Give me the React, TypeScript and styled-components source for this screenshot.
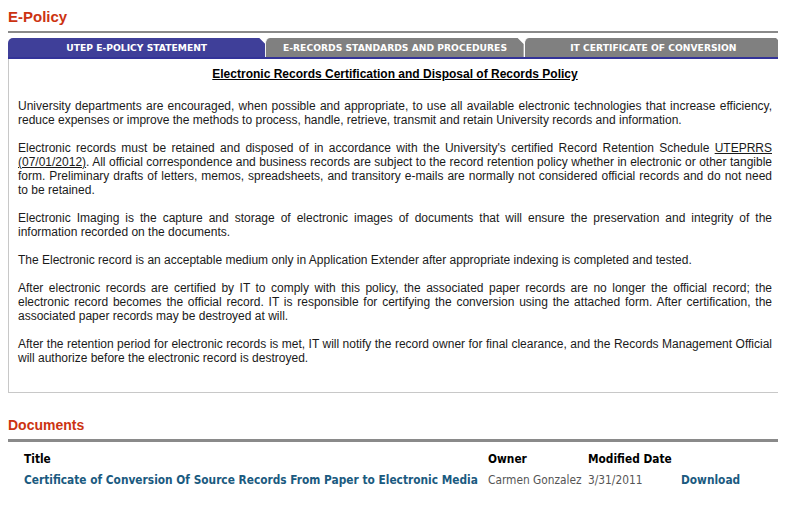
import React, { useState } from 'react';
import styled, { createGlobalStyle, css } from 'styled-components';

const GlobalStyle = createGlobalStyle`
  body {
    margin: 8px;
    background: #ffffff;
    font-family: "Liberation Sans", Arial, sans-serif;
    color: #000;
  }
`;

const Page = styled.div`
  width: 774px;
`;

const SectionTitle = styled.h2`
  margin: 0;
  padding: 0 0 6px;
  font-family: "Liberation Sans", Arial, sans-serif;
  font-size: 15px;
  font-weight: 700;
  color: #cc3311;
  border-bottom: 2px solid #8a8a8a;
`;

const Tabs = styled.div`
  display: flex;
  margin-top: 5px;
  border-bottom: 2px solid #333399;
`;

const Tab = styled.button<{ active?: boolean }>`
  flex: 1;
  height: 19px;
  padding: 0;
  border: none;
  border-left: 1px solid #ffffff;
  border-radius: 5px 5px 0 0;
  font-family: "DejaVu Sans", Verdana, sans-serif;
  font-size: 9.2px;
  font-weight: 700;
  color: #ffffff;
  cursor: pointer;
  background: #808080;
  clip-path: polygon(0 0, calc(100% - 6px) 0, 100% 6px, 100% 100%, 0 100%);

  ${props => props.active && css`
    background: #3f3f99;
    border-left: none;
  `}
`;

const Panel = styled.div`
  border: 1px solid #c8c8c8;
  border-top: none;
  padding: 8px 9px 13px;
  font-size: 12px;
  line-height: 14px;
`;

const PanelHeading = styled.h3`
  margin: 0 0 18px;
  text-align: center;
  font-size: 12px;
  font-weight: 700;
  text-decoration: underline;
`;

const Para = styled.p`
  margin: 0 0 14px;
  text-align: justify;
  color: #1a1a1a;
`;

const DocLink = styled.a`
  color: inherit;
  text-decoration: underline;
`;

const DocsTitle = styled(SectionTitle)`
  margin-top: 24px;
  font-size: 14px;
  padding-bottom: 6px;
  border-bottom-width: 3px;
`;

const DocTable = styled.table`
  margin: 10px 0 0 16px;
  border-collapse: collapse;
  font-family: "DejaVu Sans Condensed", "DejaVu Sans", Verdana, sans-serif;
  font-size: 11.8px;
`;

const HeadCell = styled.th<{ w: number }>`
  width: ${props => props.w}px;
  padding: 0 0 4px;
  text-align: left;
  font-weight: 700;
  color: #000;
`;

const Cell = styled.td<{ muted?: boolean; link?: boolean }>`
  padding: 3px 0;
  color: ${props => (props.muted ? '#555555' : '#1a5a80')};
  font-weight: ${props => (props.link ? 700 : 400)};
  white-space: nowrap;
`;

const TableLink = styled.a`
  color: #1a5a80;
  font-weight: 700;
  text-decoration: none;
`;

const tabs = [
  'UTEP E-POLICY STATEMENT',
  'E-RECORDS STANDARDS AND PROCEDURES',
  'IT CERTIFICATE OF CONVERSION',
];

const App: React.FC = () => {
  const [activeTab, setActiveTab] = useState(0);

  return (
    <Page>
      <GlobalStyle />
      <SectionTitle>E-Policy</SectionTitle>

      <Tabs>
        {tabs.map((label, i) => (
          <Tab key={label} active={i === activeTab} onClick={() => setActiveTab(i)}>
            {label}
          </Tab>
        ))}
      </Tabs>

      <Panel>
        <PanelHeading>Electronic Records Certification and Disposal of Records Policy</PanelHeading>
        <Para>
          University departments are encouraged, when possible and appropriate, to use all available electronic
          technologies that increase efficiency, reduce expenses or improve the methods to process, handle, retrieve,
          transmit and retain University records and information.
        </Para>
        <Para>
          Electronic records must be retained and disposed of in accordance with the University's certified Record
          Retention Schedule <DocLink href="#">UTEPRRS (07/01/2012)</DocLink>. All official correspondence and business
          records are subject to the record retention policy whether in electronic or other tangible form. Preliminary
          drafts of letters, memos, spreadsheets, and transitory e-mails are normally not considered official records
          and do not need to be retained.
        </Para>
        <Para>
          Electronic Imaging is the capture and storage of electronic images of documents that will ensure the
          preservation and integrity of the information recorded on the documents.
        </Para>
        <Para>
          The Electronic record is an acceptable medium only in Application Extender after appropriate indexing is
          completed and tested.
        </Para>
        <Para>
          After electronic records are certified by IT to comply with this policy, the associated paper records are no
          longer the official record; the electronic record becomes the official record. IT is responsible for
          certifying the conversion using the attached form. After certification, the associated paper records may be
          destroyed at will.
        </Para>
        <Para>
          After the retention period for electronic records is met, IT will notify the record owner for final
          clearance, and the Records Management Official will authorize before the electronic record is destroyed.
        </Para>
      </Panel>

      <DocsTitle>Documents</DocsTitle>
      <DocTable>
        <thead>
          <tr>
            <HeadCell w={464}>Title</HeadCell>
            <HeadCell w={100}>Owner</HeadCell>
            <HeadCell w={93}>Modified Date</HeadCell>
            <HeadCell w={80}></HeadCell>
          </tr>
        </thead>
        <tbody>
          <tr>
            <Cell link>
              <TableLink href="#">Certificate of Conversion Of Source Records From Paper to Electronic Media</TableLink>
            </Cell>
            <Cell muted>Carmen Gonzalez</Cell>
            <Cell muted>3/31/2011</Cell>
            <Cell link>
              <TableLink href="#">Download</TableLink>
            </Cell>
          </tr>
        </tbody>
      </DocTable>
    </Page>
  );
};

export default App;
